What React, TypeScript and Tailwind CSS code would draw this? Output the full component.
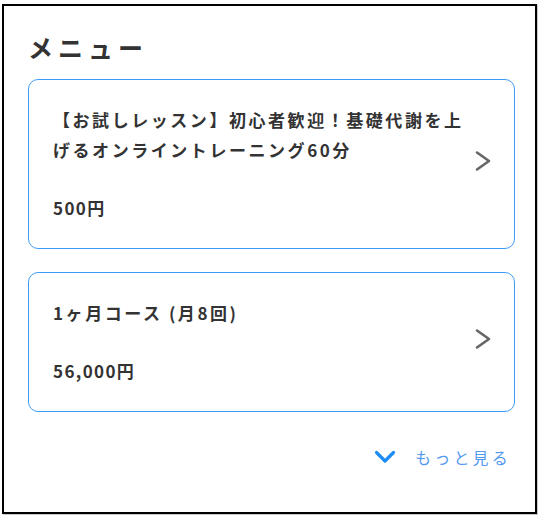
import React from "react";

const font = { fontFamily: '"Noto Sans CJK JP", "Noto Sans", sans-serif' };

function ChevronRight() {
  return (
    <svg width="18" height="22" viewBox="0 0 18 22" fill="none" className="shrink-0">
      <path d="M3 2.5 L15 11 L3 19.5" stroke="#666" strokeWidth="2.6" strokeLinecap="round" strokeLinejoin="round" />
    </svg>
  );
}

function ChevronDown() {
  return (
    <svg width="22" height="14" viewBox="0 0 22 14" fill="none">
      <path d="M2.5 2.5 L11 11 L19.5 2.5" stroke="#1e8cf5" strokeWidth="3.2" strokeLinecap="round" strokeLinejoin="round" />
    </svg>
  );
}

function Card({ title, price }: { title: string; price: string }) {
  return (
    <div className="flex items-center rounded-[10px] border border-[#3d9df5] pl-[24px] pr-[22px] py-[25px]">
      <div className="flex-1 min-w-0 pr-[4px]">
        <div className="text-[17px] leading-[30px] font-semibold tracking-[0.15em] text-[#333]">{title}</div>
        <div className="mt-[28px] text-[17px] leading-[30px] font-semibold tracking-[0.08em] text-[#333]">{price}</div>
      </div>
      <div className="-mt-[6px]">
        <ChevronRight />
      </div>
    </div>
  );
}

export default function App() {
  return (
    <div className="w-[540px] h-[517px] bg-white pt-[4px] pl-[2px]" style={font}>
      <div className="w-[535px] h-[510px] border-2 border-black shadow-[1px_1px_0_#c8c8c8] pl-[24px] pr-[20px] pt-[23px]">
        <h2 className="text-[25px] leading-[36px] font-bold tracking-[0.2em] text-[#333] mb-[14px]">メニュー</h2>
        <div className="flex flex-col gap-[23px]">
          <Card title="【お試しレッスン】初心者歓迎！基礎代謝を上げるオンライントレーニング60分" price="500円" />
          <Card title="1ヶ月コース (月8回)" price="56,000円" />
        </div>
        <div className="mt-[33px] flex justify-end items-center pr-[4px]">
          <ChevronDown />
          <span className="ml-[19px] text-[16px] leading-[24px] tracking-[0.2em] text-[#5499f0]">もっと見る</span>
        </div>
      </div>
    </div>
  );
}
